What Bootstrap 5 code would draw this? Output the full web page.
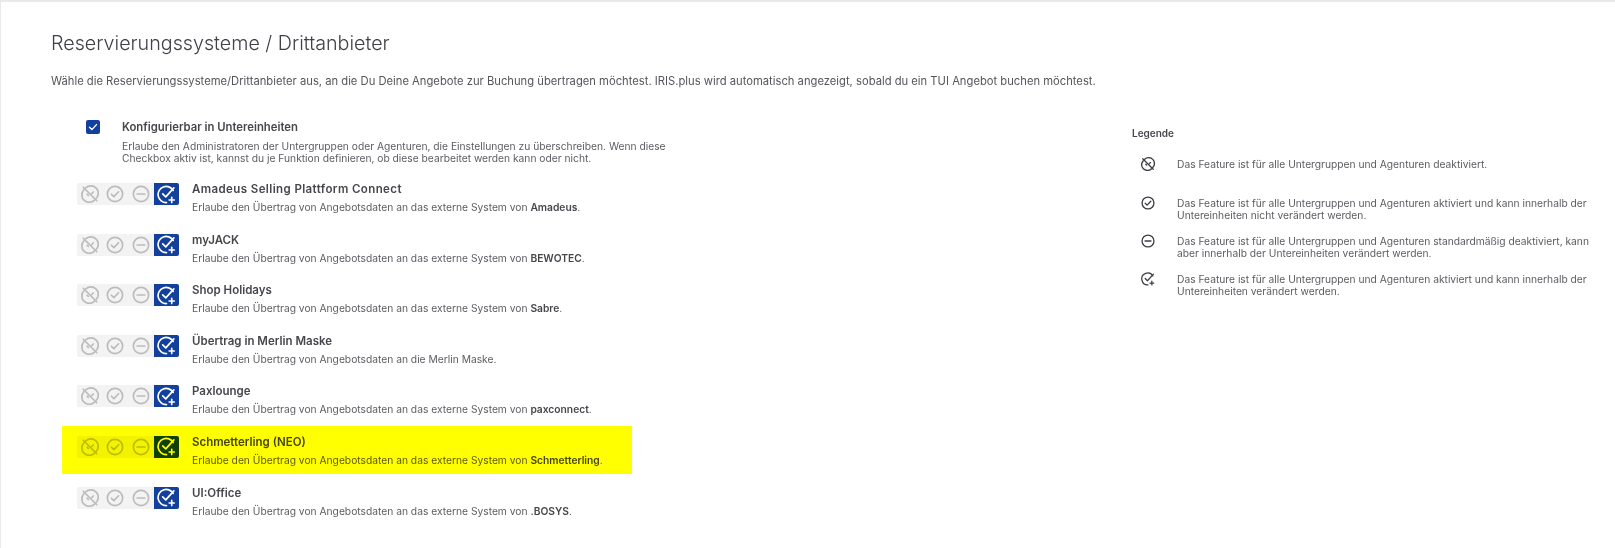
<!DOCTYPE html>
<html lang="de">
<head>
  <meta charset="UTF-8">
  <title>Reservierungssysteme</title>
  <link rel="stylesheet" href="https://cdn.jsdelivr.net/npm/bootstrap@5.3.2/dist/css/bootstrap.min.css"/>
  <style>
    html, body { height: 100%; }
    body { font-family: Inter, "Liberation Sans", sans-serif; color: #4a4a50; background: #fff; overflow: hidden; }
    .page-box { border-top: 2px solid #e9e9e9; border-left: 1px solid #e9e9e9; height: 100%; padding: 29px 0 0 50px; }
    .page-title { font-size: 19.7px; font-weight: 300; line-height: 24px; margin: 0 0 19px; color: #404048; }
    .page-desc { font-size: 11.22px; line-height: 14px; margin: 0 0 31px; color: #55555c; }
    .left-col { width: 1081px; flex: none; }
    .opt-row { display: flex; align-items: flex-start; width: 570px; height: 48px; margin-left: 11px; padding: 10px 0 0 15px; }
    .opt-row + .opt-row { margin-top: 2.6px; }
    .opt-row.hilite { background: #ff0; }
    .opt-row.hilite .toggle-group, .opt-row.hilite .opt-text { mix-blend-mode: multiply; }
    .toggle-group { display: flex; width: 102px; height: 22px; background: #f3f3f3; border-radius: 2px; flex: none; margin-right: 13px; }
    .toggle-item { width: 25.5px; height: 22px; display: flex; align-items: center; justify-content: center; color: #bcbcbc; }
    .toggle-item.on { background: #12409c; color: #fff; border-radius: 0 2px 2px 0; }
    .opt-title { font-size: 11.5px; font-weight: 600; line-height: 14px; color: #46464c; margin-bottom: 5px; margin-top: -1px; }
    .opt-title.wide-title { letter-spacing: .4px; }
    .opt-sub { font-size: 10.25px; line-height: 12px; color: #5c5c62; }
    .opt-sub b { font-weight: 600; color: #46464c; }
    .head-row { display: flex; margin: 0 0 9px 35px; }
    .fake-check { width: 14px; height: 14px; background: #12409c; border-radius: 2px; flex: none; margin-right: 22px; margin-top: 1px; display: flex; align-items: center; justify-content: center; }
    .head-row .opt-sub { width: 560px; margin-top: 0; }
    .head-row .opt-title { margin-top: 1px; margin-bottom: 6px; font-size: 11.3px; }
    .legend-title { font-size: 10px; font-weight: 600; color: #46464c; line-height: 12px; margin: 8px 0 19px; }
    .legend-row { display: flex; font-size: 10.25px; line-height: 12px; color: #5c5c62; width: 465px; margin-bottom: 14px; }
    .legend-row.one-line { margin-bottom: 26px; }
    .legend-ico { width: 45px; padding-left: 9px; flex: none; color: #3c3c44; margin-top: -1px; }
  </style>
</head>
<body>
  <div class="page-box">
    <h1 class="page-title">Reservierungssysteme / Drittanbieter</h1>
    <p class="page-desc">Wähle die Reservierungssysteme/Drittanbieter aus, an die Du Deine Angebote zur Buchung übertragen möchtest. IRIS.plus wird automatisch angezeigt, sobald du ein TUI Angebot buchen möchtest.</p>

    <svg width="0" height="0" class="position-absolute">
      <symbol id="i-off" viewBox="0 0 16 16"><g fill="none" stroke="currentColor" stroke-width="1.5" stroke-linecap="round"><path d="M4.2 2.6A6.5 6.5 0 0 1 13.4 12M12 13.4A6.5 6.5 0 0 1 2.6 4.2"/><path d="M2 2l12 12"/><path d="M10.9 6.2 9.6 7.6M5.5 8.2l1 1"/></g></symbol>
      <symbol id="i-check" viewBox="0 0 16 16"><g fill="none" stroke="currentColor" stroke-width="1.5" stroke-linecap="round" stroke-linejoin="round"><circle cx="8" cy="8" r="6.8"/><path d="M4.8 8.2l2.2 2.2 4.2-4.4"/></g></symbol>
      <symbol id="i-minus" viewBox="0 0 16 16"><g fill="none" stroke="currentColor" stroke-width="1.5" stroke-linecap="round"><circle cx="8" cy="8" r="6.8"/><path d="M4.6 8h6.8"/></g></symbol>
      <symbol id="i-plus" viewBox="0 0 16 16"><g fill="none" stroke="currentColor" stroke-width="1.4" stroke-linecap="round" stroke-linejoin="round"><path d="M13.6 4.6A6.8 6.8 0 1 0 8 14.8"/><path d="M4.8 7.4l2.6 2.6 6.8-7.6"/><path d="M12.4 10.4v4.4M10.2 12.6h4.4"/></g></symbol>
    </svg>

    <div class="d-flex">
      <div class="left-col">
        <div class="head-row">
          <div class="fake-check"><svg width="10" height="10" viewBox="0 0 10 10"><path d="M1.5 5.2l2.4 2.4 4.6-5" fill="none" stroke="#fff" stroke-width="1.4" stroke-linecap="round" stroke-linejoin="round"/></svg></div>
          <div>
            <div class="opt-title">Konfigurierbar in Untereinheiten</div>
            <div class="opt-sub">Erlaube den Administratoren der Untergruppen oder Agenturen, die Einstellungen zu überschreiben. Wenn diese Checkbox aktiv ist, kannst du je Funktion definieren, ob diese bearbeitet werden kann oder nicht.</div>
          </div>
        </div>
        <div id="rows"></div>
      </div>
      <div class="flex-grow-1">
        <div class="legend-title">Legende</div>
        <div class="legend-row one-line"><div class="legend-ico"><svg width="14" height="14"><use href="#i-off"/></svg></div><div>Das Feature ist für alle Untergruppen und Agenturen deaktiviert.</div></div>
        <div class="legend-row"><div class="legend-ico"><svg width="14" height="14"><use href="#i-check"/></svg></div><div>Das Feature ist für alle Untergruppen und Agenturen aktiviert und kann innerhalb der Untereinheiten nicht verändert werden.</div></div>
        <div class="legend-row"><div class="legend-ico"><svg width="14" height="14"><use href="#i-minus"/></svg></div><div>Das Feature ist für alle Untergruppen und Agenturen standardmäßig deaktiviert, kann aber innerhalb der Untereinheiten verändert werden.</div></div>
        <div class="legend-row"><div class="legend-ico"><svg width="14" height="14"><use href="#i-plus"/></svg></div><div>Das Feature ist für alle Untergruppen und Agenturen aktiviert und kann innerhalb der Untereinheiten verändert werden.</div></div>
      </div>
    </div>
  </div>
  <script>
    let items = [
      ['Amadeus Selling Plattform Connect', 'an das externe System von <b>Amadeus</b>.', false, 'wide-title'],
      ['myJACK', 'an das externe System von <b>BEWOTEC</b>.'],
      ['Shop Holidays', 'an das externe System von <b>Sabre</b>.'],
      ['Übertrag in Merlin Maske', 'an die Merlin Maske.'],
      ['Paxlounge', 'an das externe System von <b>paxconnect</b>.'],
      ['Schmetterling (NEO)', 'an das externe System von <b>Schmetterling</b>.', true],
      ['UI:Office', 'an das externe System von <b>.BOSYS</b>.']
    ]
    let html = ''
    for (let i = 0; i < items.length; i++) {
      html += `
        <div class="opt-row ${items[i][2] ? 'hilite' : ''}">
          <div class="toggle-group">
            <div class="toggle-item"><svg width="18" height="18"><use href="#i-off"/></svg></div>
            <div class="toggle-item"><svg width="18" height="18"><use href="#i-check"/></svg></div>
            <div class="toggle-item"><svg width="18" height="18"><use href="#i-minus"/></svg></div>
            <div class="toggle-item on"><svg width="19" height="19"><use href="#i-plus"/></svg></div>
          </div>
          <div class="opt-text">
            <div class="opt-title ${items[i][3] || ''}">${items[i][0]}</div>
            <div class="opt-sub">Erlaube den Übertrag von Angebotsdaten ${items[i][1]}</div>
          </div>
        </div>`
    }
    document.getElementById('rows').innerHTML = html
  </script>
</body>
</html>
